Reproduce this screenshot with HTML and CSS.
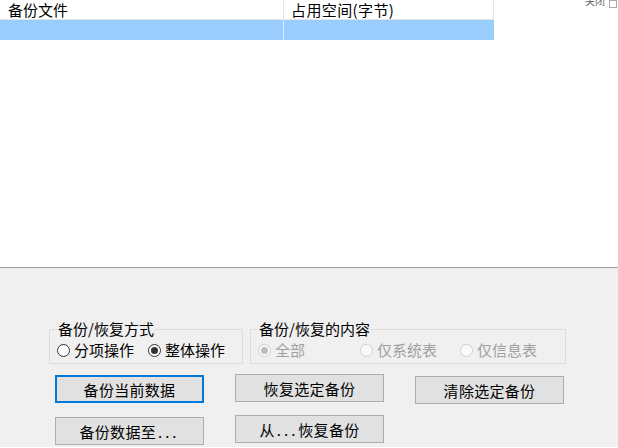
FILE: index.html
```html
<!DOCTYPE html>
<html lang="zh-CN">
<head>
<meta charset="utf-8">
<link rel="stylesheet" href="styles.css">
</head>
<body>
<div class="top">
  <div class="list">
    <div class="list-head">
      <div class="col c1">备份文件</div>
      <div class="col c2">占用空间(字节)</div>
    </div>
    <div class="list-row sel">
      <div class="col c1"></div>
      <div class="col c2"></div>
    </div>
  </div>
  <div class="close">关闭 <span class="close-box"></span></div>
</div>
<div class="panel">
  <div class="groups">
    <fieldset class="group g1">
      <legend>备份/恢复方式</legend>
      <div class="radios">
        <label class="radio w91"><span class="dot"></span>分项操作</label>
        <label class="radio"><span class="dot on"></span>整体操作</label>
      </div>
    </fieldset>
    <fieldset class="group g2">
      <legend>备份/恢复的内容</legend>
      <div class="radios dis">
        <label class="radio w102"><span class="dot on"></span>全部</label>
        <label class="radio w100"><span class="dot"></span>仅系统表</label>
        <label class="radio"><span class="dot"></span>仅信息表</label>
      </div>
    </fieldset>
  </div>
  <div class="buttons">
    <button class="btn focus m1">备份当前数据</button>
    <button class="btn">恢复选定备份</button>
    <button class="btn m2">清除选定备份</button>
    <button class="btn m2">备份数据至<span class="dots">...</span></button>
    <button class="btn">从<span class="dots">...</span>恢复备份</button>
  </div>
</div>
</body>
</html>
```
FILE: styles.css
```css
html, body {
  margin: 0;
  padding: 0;
  width: 618px;
  height: 448px;
  overflow: hidden;
  background: #ffffff;
  font-family: "Noto Sans CJK SC", "Liberation Sans", sans-serif;
  font-size: 15px;
  color: #000;
}
.top {
  position: relative;
  height: 267px;
  background: #fff;
}
.list {
  width: 494px;
}
.list-head {
  display: flex;
  height: 19px;
  border-bottom: 1px solid #e5e5e5;
  line-height: 19px;
}
.list-head .c1 {
  width: 275px;
  padding-left: 8px;
  border-right: 1px solid #e5e5e5;
}
.list-head .c2 {
  width: 202px;
  padding-left: 7px;
  border-right: 1px solid #e5e5e5;
  letter-spacing: 0.4px;
}
.col {
  white-space: nowrap;
  overflow: hidden;
}
.list-row {
  display: flex;
  height: 20px;
}
.list-row.sel {
  background: #99cdfd;
}
.list-row .c1 {
  width: 283px;
  border-right: 1px solid #d6ecff;
}
.list-row .c2 {
  width: 210px;
}
.close {
  position: absolute;
  top: -6px;
  left: 585px;
  font-size: 10px;
  line-height: 14px;
  color: #666;
  display: flex;
  align-items: center;
  gap: 4px;
}
.close-box {
  display: inline-block;
  width: 6px;
  height: 6px;
  border: 1px solid #aaa;
  margin-top: 5px;
}
.panel {
  border-top: 1px solid #a0a0a0;
  background: #f0f0f0;
  height: 180px;
  box-sizing: border-box;
  padding: 52px 0 0 49px;
}
.groups {
  display: flex;
  gap: 7px;
  align-items: flex-start;
}
.group {
  margin: 0;
  padding: 0 7px 4px 7px;
  border: 1px solid #dcdcdc;
  box-sizing: border-box;
  min-width: 0;
}
.g1 { width: 194px; }
.g2 { width: 316px; }
.group legend {
  padding: 0 1px;
  line-height: 18px;
  font-size: 15px;
}
.radios {
  display: flex;
  margin-top: 3px;
  line-height: 18px;
  white-space: nowrap;
}
.radio {
  display: flex;
  align-items: center;
  gap: 4px;
}
.w91 { width: 91px; }
.w102 { width: 102px; }
.w100 { width: 100px; }
.dot {
  width: 13px;
  height: 13px;
  box-sizing: border-box;
  border: 1px solid #333;
  border-radius: 50%;
  background: #fff;
  display: flex;
  align-items: center;
  justify-content: center;
  flex: none;
}
.dot.on::after {
  content: "";
  width: 7px;
  height: 7px;
  border-radius: 50%;
  background: #333;
}
.dis {
  color: #a0a0a0;
}
.dis .dot {
  border-color: #d0d0d0;
  background: #fafafa;
}
.dis .dot.on::after {
  background: #bdbdbd;
}
.buttons {
  display: grid;
  grid-template-columns: 149px 149px 149px;
  column-gap: 31px;
  row-gap: 11px;
  margin: 10px 0 0 6px;
  align-items: start;
}
.btn {
  height: 28px;
  box-sizing: border-box;
  margin: 0;
  padding: 0;
  background: #e1e1e1;
  border: 1px solid #adadad;
  font-family: "Noto Sans CJK SC", "Liberation Sans", sans-serif;
  font-size: 15px;
  color: #000;
  letter-spacing: 0.3px;
}
.dots {
  letter-spacing: 3px;
  margin-left: 2px;
}
.btn.focus {
  border: 2px solid #0078d7;
}
.m1 { margin-top: 1px; }
.m2 { margin-top: 2px; }
```
